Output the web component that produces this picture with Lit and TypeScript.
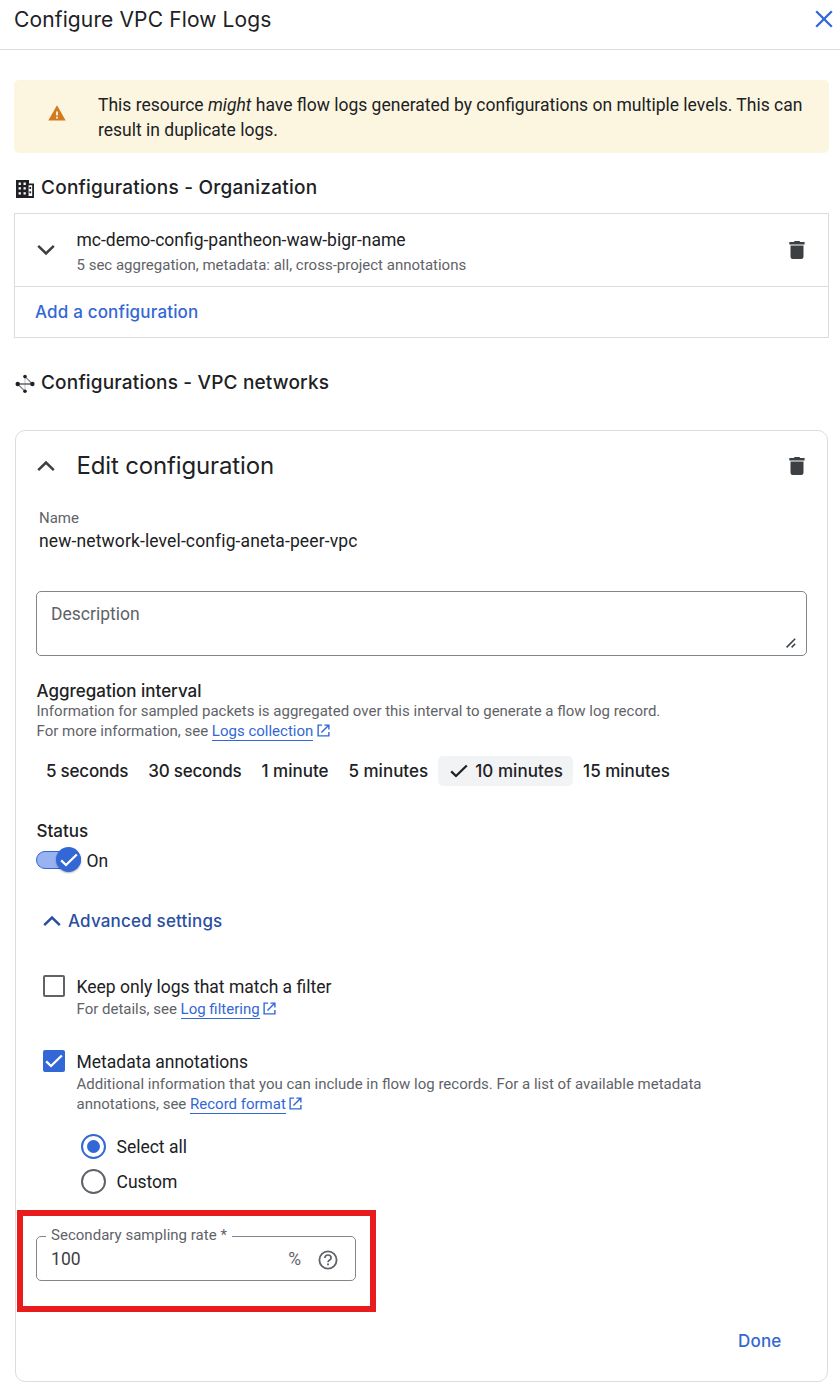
import { LitElement, html, css, svg } from "lit";
import { customElement, property, state } from "lit/decorators.js";
import { classMap } from "lit/directives/class-map.js";

const shapes: Record<string, { box: string; w: number; h: number; body: unknown }> = {
  close: { box: "0 0 18 18", w: 18, h: 18, body: svg`<path d="M1.2 1.2 16.8 16.8M16.8 1.2 1.2 16.8" fill="none" stroke="currentColor" stroke-width="2.3"/>` },
  warning: { box: "0 0 18 16", w: 18, h: 16, body: svg`<path d="M9 0.3 17.7 15.6H0.3Z" fill="currentColor"/><path d="M8.1 6.5h1.8v4H8.1zM8.1 11.8h1.8v1.8H8.1z" fill="#fcf6e0"/>` },
  building: { box: "0 0 18 18", w: 18, h: 18, body: svg`<path fill="currentColor" fill-rule="evenodd" d="M0 0H13V3.4H18V18H0ZM2.6 2.6v2.3h2.3V2.6zM7.5 2.6v2.3h2.3V2.6zM2.6 7.3v2.3h2.3V7.3zM7.5 7.3v2.3h2.3V7.3zM2.6 12.2v2.3h2.3v-2.3zM7.5 12.2v2.3h2.3v-2.3zM12.6 5.3V16h3.6V5.3z"/><path d="M13.4 7h1.7v2h-1.7zM13.4 11.2h1.7v2h-1.7z" fill="currentColor"/>` },
  network: { box: "0 0 20 20", w: 20, h: 20, body: svg`<path d="M10 2.6V17.3" stroke="#bdc1c6" stroke-width="1"/><path d="M10 2.6 17.5 10M2.6 10 10 17.3" fill="none" stroke="#80868b" stroke-width="1.2"/><path d="M3 10H17" stroke="#5f6368" stroke-width="1.5"/><g fill="currentColor"><circle cx="10" cy="2.6" r="1.8"/><circle cx="2.7" cy="10" r="2.2"/><circle cx="17.4" cy="10" r="2.2"/><circle cx="10" cy="17.3" r="1.8"/></g>` },
  down: { box: "0 0 18 12", w: 18, h: 12, body: svg`<path d="M1.2 1.8 9 9.5 16.8 1.8" fill="none" stroke="currentColor" stroke-width="2.5"/>` },
  up: { box: "0 0 18 12", w: 18, h: 12, body: svg`<path d="M1.2 10.2 9 2.5 16.8 10.2" fill="none" stroke="currentColor" stroke-width="2.5"/>` },
  trash: { box: "0 0 16 18", w: 16, h: 18, body: svg`<path d="M5.2 0H10.8V1H15.6V3.6H.3V1H5.2ZM1.5 4.6H14.5V15.8Q14.5 18 12.3 18H3.7Q1.5 18 1.5 15.8Z" fill="currentColor"/>` },
  open: { box: "0 0 14 14", w: 13, h: 13, body: svg`<path d="M5.5 1.2H1.2V12.8H12.8V8.5M8 1.2H12.8V6M12.6 1.4 4.8 9.2" fill="none" stroke="currentColor" stroke-width="1.5"/>` },
  check: { box: "0 0 18 14", w: 18, h: 14, body: svg`<path d="M1.2 7.4 6 12 16.8 1.5" fill="none" stroke="currentColor" stroke-width="2.3"/>` },
  help: { box: "0 0 20 20", w: 20, h: 20, body: svg`<circle cx="10" cy="10" r="8.6" fill="none" stroke="currentColor" stroke-width="1.8"/><path d="M6.9 8.1C6.9 6.2 8.2 5 10 5S13.1 6.2 13.1 7.9C13.1 9.9 10 10.1 10 12.2" fill="none" stroke="currentColor" stroke-width="1.7"/><path d="M9.1 13.5h1.8v1.8H9.1z" fill="currentColor"/>` },
  grip: { box: "0 0 10 10", w: 10, h: 10, body: svg`<path d="M.6 9.4 9.2 .8M5.6 9.4 9.2 5.8" fill="none" stroke="currentColor" stroke-width="1.5"/>` },
};

@customElement("ui-icon")
class UiIcon extends LitElement {
  static styles = css`
    :host { display: inline-flex; flex: none; }
    svg { display: block; }
  `;
  @property() name = "close";
  render() {
    const s = shapes[this.name];
    return html`<svg width=${s.w} height=${s.h} viewBox=${s.box} aria-hidden="true">${s.body}</svg>`;
  }
}

@customElement("doc-link")
class DocLink extends LitElement {
  static styles = css`
    :host { color: #3367d6; white-space: nowrap; }
    .label { border-bottom: 1px solid #3367d6; }
    ui-icon { vertical-align: -1px; margin-left: 3.5px; }
  `;
  render() {
    return html`<span class="label"><slot></slot></span><ui-icon name="open"></ui-icon>`;
  }
}

@customElement("app-root")
class AppRoot extends LitElement {
  static styles = css`
    :host {
      display: block; box-sizing: border-box; width: 840px; height: 1389px; overflow: hidden;
      background: #fff; color: #202124; font: 17.5px/25px Roboto, sans-serif;
    }
    * { box-sizing: border-box; }
    h1, h2, h3, h4, p { margin: 0; }
    .display { font-family: Inter, sans-serif; white-space: nowrap; }
    .header {
      height: 50px; border-bottom: 1px solid #dadce0; display: flex;
      justify-content: space-between; align-items: flex-start; padding: 5px 7px 0 14px;
    }
    .title { font-size: 21px; line-height: 29px; font-weight: 400; letter-spacing: 0.13px; }
    .header ui-icon { color: #3367d6; margin-top: 5px; }
    .banner {
      margin: 30px 11px 0 14px; height: 73px; padding: 13px 20px 0 33.5px; display: flex;
      background: #fcf6e0; border-radius: 5px; white-space: nowrap;
    }
    .banner ui-icon { color: #d27a20; margin: 12px 32.5px 0 0; }
    .section { display: flex; align-items: center; height: 30px; margin: 20px 0 0 15px; gap: 6px; }
    .section h2 { font-size: 19px; font-weight: 500; line-height: 30px; letter-spacing: 0.24px; }
    .section ui-icon { width: 20px; justify-content: center; margin-top: 1px; }
    .list { margin: 10px 11px 0 14px; border: 1px solid #dadce0; height: 125px; }
    .row { display: flex; height: 73px; border-bottom: 1px solid #dadce0; padding: 14px 23px 0 22px; color: #3c4043; }
    .row .chev { margin-top: 16px; }
    .row .grow { flex: 1; margin-left: 21.5px; }
    .row .bin { margin-top: 13px; }
    .name { color: #202124; }
    .small { font-size: 15px; line-height: 20px; color: #5f6368; white-space: nowrap; }
    .row .small { line-height: 25px; }
    .action { color: #3367d6; font-size: 17px; font-weight: 500; letter-spacing: 0.17px; }
    .add { padding-left: 20px; line-height: 50px; }
    .vpc { margin-top: 30px; }
    .vpc h2 { letter-spacing: 0.18px; }
    .card {
      margin: 32px 12px 0 15px; height: 952px; border: 1px solid #dadce0; border-radius: 10px;
      padding: 0 20px; display: flex; flex-direction: column;
    }
    .cardhead { display: flex; align-items: center; height: 70px; color: #3c4043; padding: 0 2px 0 1px; }
    .cardhead h3 { color: #202124; flex: 1; margin-left: 21.5px; font-size: 24px; font-weight: 400; line-height: 40px; letter-spacing: -0.15px; }
    .field { padding: 7px 0 0 3px; height: 46px; margin-bottom: 44px; }
    .field .full { padding-top: 1px; letter-spacing: 0.13px; }
    .area {
      height: 65px; border: 1px solid #80868b; border-radius: 5px; padding: 10px 10px 7px 14px;
      display: flex; justify-content: space-between; color: #5f6368;
    }
    .area ui-icon { align-self: flex-end; color: #3c4043; }
    .sub { font-size: 17px; font-weight: 500; line-height: 20px; padding-left: 0.5px; }
    .info { padding-left: 0.5px; }
    .agg { margin-top: 25px; }
    .choices { display: flex; margin-top: 15px; height: 30px; }
    .choice {
      display: flex; align-items: center; padding: 0 10px; border-radius: 5px;
      font-size: 17px; font-weight: 500; line-height: 30px; letter-spacing: 0;
    }
    .choice.tight { letter-spacing: -0.21px; }
    .choice.on { background: #f1f3f4; padding: 0 10px 0 12px; gap: 7px; letter-spacing: 0.08px; }
    .status { margin-top: 35px; }
    .toggle { display: flex; align-items: center; height: 25px; margin-top: 6px; margin-bottom: 1px; }
    .track {
      width: 45px; height: 18px; border-radius: 9px; border: 1px solid #3367d6; background: #99b3f0;
      display: flex; justify-content: flex-end; align-items: center;
    }
    .thumb {
      width: 25px; height: 25px; flex: none; border-radius: 50%; background: #3367d6; color: #fff; margin-right: -1px;
      display: flex; align-items: center; justify-content: center; box-shadow: 0 1px 2px rgba(0, 0, 0, 0.3);
    }
    .toggle p { margin: 0 0 0 5.5px; padding-top: 3px; }
    .advanced {
      display: flex; align-items: center; gap: 7px; color: #2a4fa3; padding-left: 7px;
      height: 30px; margin-top: 33px; font-size: 17px; font-weight: 500; letter-spacing: 0.18px;
    }
    .option { display: flex; padding-left: 7px; }
    .option .label { height: 25px; padding-top: 1px; }
    .first { margin-top: 38px; }
    .second { margin-top: 30px; }
    .box {
      width: 22px; height: 22px; flex: none; border: 2px solid #5f6368; border-radius: 2px; margin: 1px 11.5px 0 0;
      display: flex; align-items: center; justify-content: center; color: #fff;
    }
    .box.on { background: #3367d6; border-color: #3367d6; }
    .radios { padding: 20px 0 0 45px; display: flex; flex-direction: column; gap: 10px; }
    .radio { display: flex; align-items: center; gap: 10.5px; height: 25px; }
    .radio span { padding-top: 1px; }
    .dot { width: 25px; height: 25px; border: 2px solid #5f6368; border-radius: 50%; padding: 4px; }
    .radio.on .dot { border-color: #3367d6; }
    .radio.on .dot::after { content: ""; display: block; width: 13px; height: 13px; border-radius: 50%; background: #3367d6; }
    .rate {
      position: relative; width: 320px; height: 45px; margin-top: 42px; border: 1px solid #80868b;
      border-radius: 5px; display: flex; align-items: center; padding: 0 17px 0 14px; color: #3c4043;
    }
    .rate .value { flex: 1; padding-top: 1px; letter-spacing: 0.1px; }
    .rate .unit { font-size: 17.5px; color: #5f6368; margin-right: 17px; padding-top: 1px; }
    .rate ui-icon { color: #5f6368; margin-top: 2px; }
    .float { position: absolute; left: 9px; top: -12px; background: #fff; padding: 0 5px; letter-spacing: 0.02px; }
    .mark { position: absolute; left: -20px; top: -27px; width: 359px; height: 102px; border: 6px solid #e81c1c; }
    .done { margin: 48px 25.5px 0 0; align-self: flex-end; line-height: 25px; }
  `;

  @state() private interval = "10 minutes";
  @state() private metadata = "Select all";

  render() {
    const intervals = ["5 seconds", "30 seconds", "1 minute", "5 minutes", "10 minutes", "15 minutes"];
    return html`
      <header class="header">
        <h1 class="title display">Configure VPC Flow Logs</h1>
        <ui-icon name="close"></ui-icon>
      </header>
      <div class="banner">
        <ui-icon name="warning"></ui-icon>
        <p>This resource <em>might</em> have flow logs generated by configurations on multiple levels. This can<br />result in duplicate logs.</p>
      </div>
      <div class="section"><ui-icon name="building"></ui-icon><h2 class="display">Configurations - Organization</h2></div>
      <div class="list">
        <div class="row">
          <ui-icon class="chev" name="down"></ui-icon>
          <div class="grow">
            <p class="name">mc-demo-config-pantheon-waw-bigr-name</p>
            <p class="small">5 sec aggregation, metadata: all, cross-project annotations</p>
          </div>
          <ui-icon class="bin" name="trash"></ui-icon>
        </div>
        <div class="add action display">Add a configuration</div>
      </div>
      <div class="section vpc"><ui-icon name="network"></ui-icon><h2 class="display">Configurations - VPC networks</h2></div>
      <section class="card">
        <div class="cardhead">
          <ui-icon name="up"></ui-icon>
          <h3 class="display">Edit configuration</h3>
          <ui-icon class="bin" name="trash"></ui-icon>
        </div>
        <div class="field">
          <p class="small">Name</p>
          <p class="full">new-network-level-config-aneta-peer-vpc</p>
        </div>
        <div class="area"><span>Description</span><ui-icon name="grip"></ui-icon></div>
        <h4 class="sub agg display">Aggregation interval</h4>
        <p class="small info">
          Information for sampled packets is aggregated over this interval to generate a flow log record.<br />For more
          information, see <doc-link>Logs collection</doc-link>
        </p>
        <div class="choices">
          ${intervals.map((t) => {
            const on = t === this.interval;
            return html`<div class="choice display ${classMap({ on, tight: t.endsWith("seconds") })}" @click=${() => (this.interval = t)}>
              ${on ? html`<ui-icon name="check"></ui-icon>` : null}<span>${t}</span>
            </div>`;
          })}
        </div>
        <h4 class="sub status display">Status</h4>
        <div class="toggle">
          <div class="track"><div class="thumb"><ui-icon name="check"></ui-icon></div></div>
          <p>On</p>
        </div>
        <div class="advanced display"><ui-icon name="up"></ui-icon><span>Advanced settings</span></div>
        <div class="option first">
          <div class="box"></div>
          <div>
            <p class="label">Keep only logs that match a filter</p>
            <p class="small">For details, see <doc-link>Log filtering</doc-link></p>
          </div>
        </div>
        <div class="option second">
          <div class="box on"><ui-icon name="check"></ui-icon></div>
          <div>
            <p class="label">Metadata annotations</p>
            <p class="small">
              Additional information that you can include in flow log records. For a list of available metadata<br />annotations,
              see <doc-link>Record format</doc-link>
            </p>
          </div>
        </div>
        <div class="radios">
          ${["Select all", "Custom"].map(
            (t) => html`<div class="radio ${classMap({ on: t === this.metadata })}" @click=${() => (this.metadata = t)}>
              <div class="dot"></div><span>${t}</span>
            </div>`
          )}
        </div>
        <div class="rate">
          <span class="float small">Secondary sampling rate *</span>
          <span class="value">100</span>
          <span class="unit">%</span>
          <ui-icon name="help"></ui-icon>
          <div class="mark"></div>
        </div>
        <div class="done action display">Done</div>
      </section>
    `;
  }
}
